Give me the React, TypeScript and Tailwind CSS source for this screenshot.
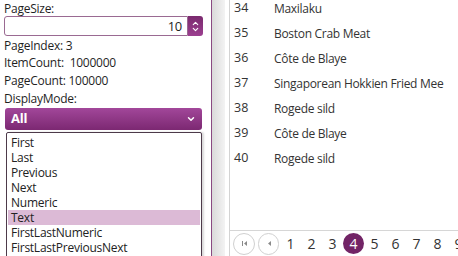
import { ChevronDown, ChevronUp } from "lucide-react";

const rows = [
  { id: 34, name: "Maxilaku" },
  { id: 35, name: "Boston Crab Meat" },
  { id: 36, name: "Côte de Blaye" },
  { id: 37, name: "Singaporean Hokkien Fried Mee" },
  { id: 38, name: "Rogede sild" },
  { id: 39, name: "Côte de Blaye" },
  { id: 40, name: "Rogede sild" },
];

const modes = [
  "First",
  "Last",
  "Previous",
  "Next",
  "Numeric",
  "Text",
  "FirstLastNumeric",
  "FirstLastPreviousNext",
];

const pages = [1, 2, 3, 4, 5, 6, 7, 8, 9];

function SettingsPanel() {
  return (
    <div className="relative w-[212px] h-full shrink-0 border-r border-[#8a4a82] pl-[4px] pt-[2px] text-[12px] tracking-[-0.25px] text-[#1f1f1f]">
      <div className="h-[14px] leading-[14px]">PageSize:</div>
      {/* numeric box */}
      <div className="flex h-[20px] w-[199px]">
        <div className="flex-1 rounded-l-[3px] border border-[#9a6a92] bg-white pr-[5px] text-right text-[13px] leading-[18px]">
          10
        </div>
        <div className="flex w-[15px] flex-col items-center justify-center rounded-r-[3px] bg-gradient-to-b from-[#7a2a6e] to-[#9c3f90] text-white">
          <ChevronUp className="-mb-[3px] h-[9px] w-[9px]" strokeWidth={3} />
          <ChevronDown className="h-[9px] w-[9px]" strokeWidth={3} />
        </div>
      </div>
      <div className="h-[18px] leading-[20px]">PageIndex: 3</div>
      <div className="h-[18px] leading-[18px]">ItemCount:&nbsp;&nbsp;1000000</div>
      <div className="h-[18px] leading-[18px]">PageCount: 100000</div>
      <div className="h-[18px] leading-[18px]">DisplayMode:</div>
      {/* purple combo */}
      <div className="ml-[1px] flex h-[22px] w-[197px] items-center justify-between rounded-[3px] bg-gradient-to-b from-[#a2479a] to-[#7c2872] px-[6px] text-white">
        <span className="text-[13px] font-bold">All</span>
        <ChevronDown className="h-[10px] w-[10px]" strokeWidth={3.5} />
      </div>

      {/* open dropdown list */}
      <div className="absolute left-[6px] top-[132px] w-[196px] rounded-t-[2px] border border-[#4d3a4a] bg-white px-[1px] pt-[2px] shadow-[2px_0_2px_rgba(0,0,0,0.15)]">
        {modes.map((m) => (
          <div
            key={m}
            className={`h-[15px] pl-[3px] text-[12px] leading-[15px] text-[#222] ${
              m === "Text" ? "bg-[#dcbad6]" : ""
            }`}
          >
            {m}
          </div>
        ))}
        <div className="h-[20px]" />
      </div>
    </div>
  );
}

function PagerIcon({ first }: { first?: boolean }) {
  return (
    <svg width="7" height="7" viewBox="0 0 7 7">
      {first && <rect x="1" y="1" width="1" height="5" fill="#8a8a8a" />}
      <path d="M6 1 L3 3.5 L6 6 Z" fill="#8a8a8a" />
    </svg>
  );
}

function ProductList() {
  return (
    <div className="flex h-full flex-1 flex-col border-l border-[#d3d3d3] bg-white text-[12px] tracking-[-0.3px] text-[#333]">
      <div className="flex-1 overflow-hidden">
        <div className="-mt-[4px]">
          {rows.map((r) => (
            <div key={r.id} className="flex h-[25px] items-center">
              <span className="w-[44px] pl-[4px] text-[12.5px] tracking-normal">{r.id}</span>
              <span>{r.name}</span>
            </div>
          ))}
        </div>
      </div>
      {/* pager */}
      <div className="flex h-[26px] shrink-0 items-center border-t border-[#d6d6d6] pl-[3px] text-[14px] tracking-normal text-[#333]">
        <div className="flex h-[22px] w-[22px] items-center justify-center rounded-full border border-[#d0d0d0]">
          <PagerIcon first />
        </div>
        <div className="ml-[3px] flex h-[22px] w-[21px] items-center justify-center rounded-full border border-[#d0d0d0]">
          <PagerIcon />
        </div>
        <div className="ml-[1px] flex">
          {pages.map((p) =>
            p === 4 ? (
              <div
                key={p}
                className="flex h-[21px] w-[21px] items-center justify-center rounded-full bg-[#722466] text-white"
              >
                {p}
              </div>
            ) : (
              <div key={p} className="flex h-[21px] w-[21px] items-center justify-center">
                {p}
              </div>
            )
          )}
        </div>
      </div>
    </div>
  );
}

export default function App() {
  return (
    <div
      className="flex h-[256px] w-[458px] overflow-hidden bg-white"
      style={{ fontFamily: '"Open Sans", "Noto Sans", sans-serif' }}
    >
      <SettingsPanel />
      <div className="w-[13px] shrink-0 bg-gradient-to-r from-[#dadada] to-[#f3f3f3]" />
      <div className="w-[4px] shrink-0 bg-white" />
      <ProductList />
    </div>
  );
}
